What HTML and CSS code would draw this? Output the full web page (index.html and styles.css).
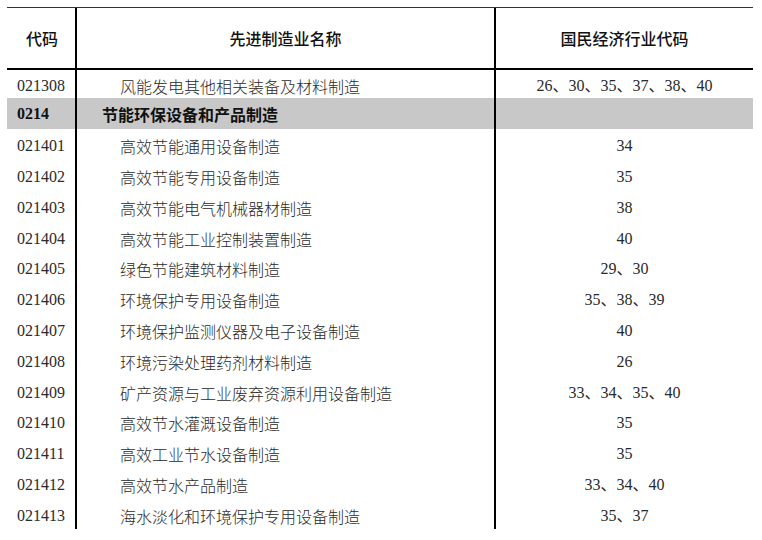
FILE: index.html
```html
<!DOCTYPE html>
<html lang="zh-CN">
<head>
<meta charset="utf-8">
<title>先进制造业分类</title>
<link rel="stylesheet" href="styles.css">
</head>
<body>
<table class="tbl">
  <colgroup>
    <col class="c-code">
    <col class="c-name">
    <col class="c-ind">
  </colgroup>
  <thead>
    <tr class="head">
      <th class="code">代码</th>
      <th class="name">先进制造业名称</th>
      <th class="ind">国民经济行业代码</th>
    </tr>
  </thead>
  <tbody>
    <tr class="first"><td class="code">021308</td><td class="name sub">风能发电其他相关装备及材料制造</td><td class="ind">26、30、35、37、38、40</td></tr>
    <tr class="cat"><td class="code">0214</td><td class="name">节能环保设备和产品制造</td><td class="ind"></td></tr>
    <tr><td class="code">021401</td><td class="name sub">高效节能通用设备制造</td><td class="ind">34</td></tr>
    <tr><td class="code">021402</td><td class="name sub">高效节能专用设备制造</td><td class="ind">35</td></tr>
    <tr><td class="code">021403</td><td class="name sub">高效节能电气机械器材制造</td><td class="ind">38</td></tr>
    <tr><td class="code">021404</td><td class="name sub">高效节能工业控制装置制造</td><td class="ind">40</td></tr>
    <tr><td class="code">021405</td><td class="name sub">绿色节能建筑材料制造</td><td class="ind">29、30</td></tr>
    <tr><td class="code">021406</td><td class="name sub">环境保护专用设备制造</td><td class="ind">35、38、39</td></tr>
    <tr><td class="code">021407</td><td class="name sub">环境保护监测仪器及电子设备制造</td><td class="ind">40</td></tr>
    <tr><td class="code">021408</td><td class="name sub">环境污染处理药剂材料制造</td><td class="ind">26</td></tr>
    <tr><td class="code">021409</td><td class="name sub">矿产资源与工业废弃资源利用设备制造</td><td class="ind">33、34、35、40</td></tr>
    <tr><td class="code">021410</td><td class="name sub">高效节水灌溉设备制造</td><td class="ind">35</td></tr>
    <tr><td class="code">021411</td><td class="name sub">高效工业节水设备制造</td><td class="ind">35</td></tr>
    <tr><td class="code">021412</td><td class="name sub">高效节水产品制造</td><td class="ind">33、34、40</td></tr>
    <tr><td class="code">021413</td><td class="name sub">海水淡化和环境保护专用设备制造</td><td class="ind">35、37</td></tr>
  </tbody>
</table>
</body>
</html>
```
FILE: styles.css
```css
html, body {
  margin: 0;
  padding: 0;
  background: #ffffff;
}
body {
  padding: 7px 0 0 7px;
  font-family: "Liberation Serif", "Noto Sans CJK SC", serif;
  font-size: 16px;
  color: #2a2a2a;
}
.tbl {
  border-collapse: separate;
  border-spacing: 0;
  table-layout: fixed;
  width: 746px;
  border-top: 1.4px solid #333333;
}
.c-code { width: 70px; }
.c-name { width: 419px; }
.c-ind { width: 257px; }

.tbl th, .tbl td {
  box-sizing: border-box;
  padding: 0;
  white-space: nowrap;
  line-height: 20px;
  vertical-align: middle;
}
.tbl .code {
  text-align: left;
  padding-left: 10px;
  border-right: 2px solid #000000;
}
.tbl .name {
  text-align: left;
  border-right: 2px solid #000000;
  padding-left: 25px;
  font-family: "Noto Sans CJK SC", sans-serif;
  font-weight: 300;
}
.tbl .name.sub {
  padding-left: 43px;
}
.tbl .ind {
  text-align: center;
}

.tbl .head th {
  height: 62px;
  border-bottom: 2px solid #000000;
  font-family: "Noto Sans CJK SC", sans-serif;
  font-weight: 500;
  color: #111111;
}
.tbl .head th.code {
  padding-left: 19px;
}
.tbl .head th.name {
  text-align: center;
  padding-left: 0;
  font-weight: 500;
}

.tbl tbody tr { height: 30.77px; }
.tbl tbody tr td { padding-top: 4px; }
.tbl tbody tr.first { height: 28px; }
.tbl tbody tr.first td { padding-top: 3px; }
.tbl tbody tr.cat { height: 31px; }
.tbl tbody tr.cat td { padding-top: 0; }

.cat td {
  background: #c8c8c8;
  color: #111111;
}
.tbl .cat td.code {
  font-weight: bold;
}
.tbl .cat td.name {
  font-weight: 700;
}
```
